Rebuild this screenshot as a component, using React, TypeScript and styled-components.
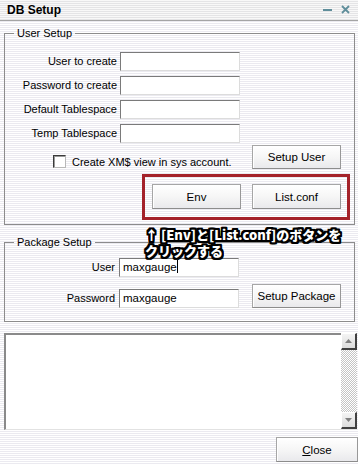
import React from "react";
import styled, { createGlobalStyle } from "styled-components";

const Global = createGlobalStyle`
  html, body { margin: 0; padding: 0; }
  body { background: #fff; }
  * { box-sizing: border-box; }
`;

const stripes = `repeating-linear-gradient(to bottom, #ffffff 0px, #ffffff 1px, #ebeaf0 1px, #ebeaf0 2px)`;

const Window = styled.div`
  position: relative;
  width: 358px;
  height: 464px;
  overflow: hidden;
  background: ${stripes};
  font-family: "Liberation Sans", Arial, sans-serif;
  font-size: 11px;
  color: #000;
`;

const TitleBar = styled.div`
  height: 21px;
  display: flex;
  align-items: center;
  padding: 0 7px 1px 7px;
  border-bottom: 1px solid #a4a4a4;
  background: repeating-linear-gradient(to bottom, #f8f8f8 0px, #f8f8f8 1px, #e4e4e6 1px, #e4e4e6 2px);
`;

const Title = styled.div`
  font-weight: bold;
  font-size: 12px;
  flex: 1;
`;

const TitleIcons = styled.div`
  display: flex;
  gap: 9px;
  align-items: center;
  margin-right: 1px;
`;

const Body = styled.div`
  padding: 5px 0 0 4px;
  display: flex;
  flex-direction: column;
`;

const Group = styled.fieldset<{ $pt: number; $pb: number }>`
  margin: 0 3px 0 0;
  padding: ${(p) => p.$pt}px 0 ${(p) => p.$pb}px 0;
  border: 1px solid #8c8c8c;
  min-width: 0;
  & + & {
    margin-top: 10px;
  }
`;

const Legend = styled.legend`
  margin-left: 9px;
  padding: 0 3px;
  line-height: 14px;
  font-size: 11px;
`;

const FormGrid = styled.div`
  display: grid;
  grid-template-columns: 112px 120px;
  grid-auto-rows: 19px;
  column-gap: 3px;
  row-gap: 5px;
`;

const Label = styled.label`
  text-align: right;
  line-height: 19px;
  white-space: nowrap;
`;

const Input = styled.div`
  height: 19px;
  width: 120px;
  background: #fff;
  border-top: 1px solid #7a7a7a;
  border-left: 1px solid #7a7a7a;
  border-bottom: 1px solid #dcdcdc;
  border-right: 1px solid #dcdcdc;
  padding-left: 3px;
  line-height: 17px;
  font-size: 11.5px;
  white-space: nowrap;
`;

const Caret = styled.span`
  display: inline-block;
  width: 1px;
  height: 13px;
  background: #000;
  vertical-align: -2px;
`;

const CheckRow = styled.div`
  display: flex;
  align-items: flex-end;
  margin-top: 2px;
  padding-left: 48px;
  padding-right: 13px;
`;

const CheckLabel = styled.div`
  display: flex;
  align-items: center;
  gap: 6px;
  margin-bottom: 1px;
  flex: 1;
`;

const CheckBox = styled.span`
  width: 13px;
  height: 13px;
  background: #fff;
  border-top: 1px solid #3a3a3a;
  border-left: 1px solid #3a3a3a;
  border-bottom: 1px solid #b8b8b8;
  border-right: 1px solid #b8b8b8;
  box-shadow: inset 1px 1px 0 #9a9a9a;
`;

const Button = styled.button<{ $w?: number; $h?: number }>`
  width: ${(p) => p.$w ?? 89}px;
  height: ${(p) => p.$h ?? 24}px;
  padding: 0;
  font-family: "Liberation Sans", Arial, sans-serif;
  font-size: 11.5px;
  color: #000;
  background: linear-gradient(to bottom, #ffffff 0%, #f6f6f6 50%, #e9e9ec 100%);
  border: 1px solid #a6a6a6;
  border-bottom-color: #8c8c8c;
  border-right-color: #989898;
  box-shadow: inset 1px 1px 0 #ffffff;
  border-radius: 0;
`;

const HighlightBox = styled.div`
  align-self: flex-end;
  margin-top: 5px;
  margin-right: 4px;
  width: 208px;
  height: 46px;
  border: 3px solid #a4222a;
  padding: 7px 6px 0 7px;
  display: flex;
  gap: 11px;
`;

const GroupInner = styled.div`
  display: flex;
  flex-direction: column;
`;

const PkgGrid = styled.div`
  display: grid;
  grid-template-columns: 110px 120px 1fr;
  grid-template-rows: 19px 24px;
  column-gap: 4px;
  row-gap: 7px;
  align-items: end;
`;

const PkgButton = styled(Button)`
  margin-left: 9px;
`;

const Memo = styled.div`
  margin-top: 11px;
  margin-right: 1px;
  height: 97px;
  display: flex;
  background: #fff;
  border-top: 2px solid #8a8a8a;
  border-left: 2px solid #8a8a8a;
  border-bottom: 1px solid #e2e2e2;
`;

const MemoText = styled.div`
  flex: 1;
`;

const ScrollBar = styled.div`
  width: 16px;
  margin-top: -2px;
  display: flex;
  flex-direction: column;
  background-color: #fff;
  background-image: conic-gradient(#c4c4c4 25%, #ffffff 0 50%, #c4c4c4 0 75%, #ffffff 0);
  background-size: 2px 2px;
`;

const ScrollArrow = styled.div`
  width: 16px;
  height: 17px;
  display: flex;
  align-items: center;
  justify-content: center;
  background: linear-gradient(to bottom, #f4f4f4, #dcdcdc);
  border-top: 1px solid #ffffff;
  border-left: 1px solid #ffffff;
  border-right: 2px solid #404040;
  border-bottom: 2px solid #404040;
`;

const Track = styled.div`
  flex: 1;
`;

const Footer = styled.div`
  display: flex;
  justify-content: flex-end;
  margin-top: 7px;
`;

const Annotation = styled.div`
  position: absolute;
  left: 145px;
  top: 227px;
  font-family: "Noto Sans CJK JP", "Liberation Sans", sans-serif;
  font-weight: 900;
  font-size: 13px;
  line-height: 16px;
  color: #fff;
  white-space: nowrap;
  text-shadow:
    -2px -2px 0 #000, 0 -2px 0 #000, 2px -2px 0 #000,
    -2px 0 0 #000, 2px 0 0 #000,
    -2px 2px 0 #000, 0 2px 0 #000, 2px 2px 0 #000,
    -1px -2px 0 #000, 1px -2px 0 #000, -1px 2px 0 #000, 1px 2px 0 #000,
    -2px -1px 0 #000, 2px -1px 0 #000, -2px 1px 0 #000, 2px 1px 0 #000,
    -1px -1px 0 #000, 1px 1px 0 #000, 1px -1px 0 #000, -1px 1px 0 #000;
`;

export default function App() {
  return (
    <Window>
      <Global />
      <TitleBar>
        <Title>DB Setup</Title>
        <TitleIcons>
          <svg width="9" height="9" viewBox="0 0 9 9">
            <rect x="0" y="4" width="9" height="2" fill="#5f8e9b" />
          </svg>
          <svg width="9" height="9" viewBox="0 0 9 9">
            <path d="M1 1 L8 8 M8 1 L1 8" stroke="#5f8e9b" strokeWidth="1.8" />
          </svg>
        </TitleIcons>
      </TitleBar>
      <Body>
        <Group $pt={12} $pb={4}>
          <Legend>User Setup</Legend>
          <GroupInner>
            <FormGrid>
              <Label>User to create</Label>
              <Input />
              <Label>Password to create</Label>
              <Input />
              <Label>Default Tablespace</Label>
              <Input />
              <Label>Temp Tablespace</Label>
              <Input />
            </FormGrid>
            <CheckRow>
              <CheckLabel>
                <CheckBox />
                <span>Create XM$ view in sys account.</span>
              </CheckLabel>
              <Button>Setup User</Button>
            </CheckRow>
            <HighlightBox>
              <Button $h={25}>Env</Button>
              <Button $h={25}>List.conf</Button>
            </HighlightBox>
          </GroupInner>
        </Group>
        <Group $pt={9} $pb={13}>
          <Legend>Package Setup</Legend>
          <PkgGrid>
            <Label>User</Label>
            <Input>
              maxgauge<Caret />
            </Input>
            <span />
            <Label>Password</Label>
            <Input>maxgauge</Input>
            <PkgButton>Setup Package</PkgButton>
          </PkgGrid>
        </Group>
        <Memo>
          <MemoText />
          <ScrollBar>
            <ScrollArrow>
              <svg width="7" height="4" viewBox="0 0 7 4">
                <path d="M0 4 L3.5 0 L7 4 Z" fill="#808080" />
              </svg>
            </ScrollArrow>
            <Track />
            <ScrollArrow>
              <svg width="7" height="4" viewBox="0 0 7 4">
                <path d="M0 0 L3.5 4 L7 0 Z" fill="#808080" />
              </svg>
            </ScrollArrow>
          </ScrollBar>
        </Memo>
        <Footer>
          <Button $w={82} $h={25}>
            <u>C</u>lose
          </Button>
        </Footer>
      </Body>
      <Annotation>
        ↑ [Env]と[List.conf]のボタンを
        <br />
        クリックする
      </Annotation>
    </Window>
  );
}
